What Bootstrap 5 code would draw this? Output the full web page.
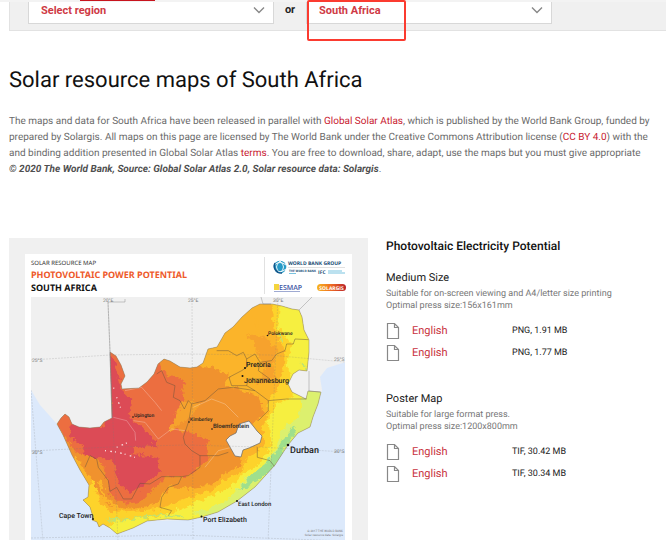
<!DOCTYPE html>
<html lang="en">
<head>
<meta charset="utf-8">
<meta name="viewport" content="width=device-width, initial-scale=1">
<title>Solar resource maps of South Africa</title>
<link href="https://cdn.jsdelivr.net/npm/bootstrap@5.3.0/dist/css/bootstrap.min.css" rel="stylesheet">
<style>
body{font-family:Roboto,"Open Sans",sans-serif;font-size:11px;line-height:16px;color:#6a6a6a;overflow:hidden;background:#fff;text-rendering:geometricPrecision}
a{color:#c8202f;text-decoration:none}
.site-edge{height:2px;background:#f3f3f3;padding-left:80px}
.site-tab{width:75px;height:1px;background:#c8141e}
.page-body{padding-left:9px}
.picker{background:#f0f0f0;border-bottom:1px solid #e2e2e2;border-left:1px solid #e2e2e2;height:29px;padding-left:18px}
.picker-item{width:246px}
.picker .form-select{height:22px;min-height:0;padding:0 30px 3px 12px;border:1px solid #d8d8d8;border-top:0;border-radius:0;background:#fff;color:#cf3a45;font-size:11px;font-weight:700;line-height:18px;box-shadow:none}
.picker-arrow{right:9px;top:4px;width:12px;height:8px;pointer-events:none}
.picker-or{width:32px;color:#222;font-size:11px;line-height:16px}
.marked{left:1px;top:-2px;width:99px;height:41px;border:2px solid #fb3b30;border-radius:2px;pointer-events:none}
h1{font-size:22px;line-height:28px;color:#111;margin:36px 0 19px}
.intro{font-size:10px;white-space:nowrap;margin-bottom:60px}
.intro strong{color:#505050}
.map-panel{width:359px;background:#f0f0f0;padding:16px}
.downloads{padding-left:18px}
h2{font-size:12px;line-height:16px;font-weight:500;color:#111;margin-bottom:16px}
h3{font-size:11px;line-height:16px;color:#222;margin-bottom:2px}
.hint{font-size:9px;line-height:12px;color:#777;margin-bottom:8px}
.file-list{margin-bottom:27px}
.file-row{height:22px}
.file-row svg{width:14px;height:18px;margin-right:12px}
.file-row a{width:100px;font-size:11px;color:#c8323e}
.file-row span{font-size:9px;color:#222}
.place{font-family:Roboto,sans-serif;fill:#222;font-weight:500}
.grid-tag{font-size:5px;fill:#777}
</style>
</head>
<body>
<div class="site-edge"><div class="site-tab"></div></div>
<main class="page-body">
<form class="picker d-flex">
  <div class="picker-item position-relative">
    <label class="visually-hidden" for="region">Region</label>
    <select class="form-select" id="region"><option>Select region</option></select>
    <svg class="picker-arrow position-absolute" viewBox="0 0 12 8" aria-hidden="true"><path d="M1 1.500 6 6.500l5-5" fill="none" stroke="#888" stroke-width="1.400"/></svg>
  </div>
  <div class="picker-or text-center fw-bold">or</div>
  <div class="picker-item position-relative">
    <label class="visually-hidden" for="country">Country</label>
    <select class="form-select" id="country"><option>South Africa</option></select>
    <svg class="picker-arrow position-absolute" viewBox="0 0 12 8" aria-hidden="true"><path d="M1 1.500 6 6.500l5-5" fill="none" stroke="#888" stroke-width="1.400"/></svg>
    <div class="marked position-absolute"></div>
  </div>
</form>
<h1 class="fw-normal">Solar resource maps of South Africa</h1>
<p class="intro">The maps and data for South Africa have been released in parallel with <a href="#">Global Solar Atlas</a>, which is published by the World Bank Group, funded by<br>
prepared by Solargis. All maps on this page are licensed by The World Bank under the Creative Commons Attribution license (<a href="#">CC BY 4.0</a>) with the<br>
and binding addition presented in Global Solar Atlas <a href="#">terms</a>. You are free to download, share, adapt, use the maps but you must give appropriate<br>
<strong class="fst-italic">© 2020 The World Bank, Source: Global Solar Atlas 2.0, Solar resource data: Solargis</strong>.</p>
<div class="d-flex">
<div class="map-panel flex-shrink-0">
<svg class="d-block w-100" viewBox="25 254 327 308" role="img" aria-label="Photovoltaic power potential, South Africa">
<defs>
<clipPath id="frame"><rect x="31" y="297" width="314" height="259"/></clipPath>
<path id="country-shape" d="M57 424 61 418 65 414 69 417 72 424 79 427 90 428 100 427 104 422 112 418 110 352 116 356 121 365 125 376 121 384 122 389 139 388 147 382 154 374 158 364 164 359 170 361 180 367 190 368 197 367 203 363 208 349 217 347 225 333 233 327 242 317 252 308 260 304 272 304 282 306 292 309 299 310 302 317 304 330 309 340 309 352 307 371 299 370 293 374 288 384 292 392 306 399 308 391 321 392 318 404 313 417 310 427 298 433 288 445 275 465 255 487 237 501 218 512 202 517 188 520 167 519 147 521 133 528 117 534 110 528 103 524 99 527 97 522 92 520 93 517 90 507 83 500 88 497 89 485 80 470 72 455 63 435Z"/>
<clipPath id="inland"><use href="#country-shape"/></clipPath>
<linearGradient id="sg"><stop stop-color="#f7b51e"/><stop offset=".5" stop-color="#ee6a24"/><stop offset="1" stop-color="#b9232b"/></linearGradient>
<filter id="rough" x="-10%" y="-10%" width="120%" height="120%" color-interpolation-filters="sRGB"><feTurbulence type="fractalNoise" baseFrequency=".2" numOctaves="4" seed="4"/><feDisplacementMap in="SourceGraphic" scale="8" xChannelSelector="R" yChannelSelector="G"/></filter>
</defs>
<rect x="25" y="254" width="327" height="308" fill="#fff"/>
<g clip-path="url(#frame)">
<rect x="31" y="297" width="314" height="259" fill="#f0f0f0"/>
<path fill="#dce9fb" d="M31 390 40 405 57 424 63 435 72 455 80 470 89 485 88 497 83 500 90 507 93 517 97 522 103 524 117 534 133 528 147 521 188 520 218 512 237 501 255 487 275 465 288 445 298 433 310 427 318 404 322 390 320 377 327 368 346 362V560H31Z"/>
<g clip-path="url(#inland)">
<rect x="50" y="297" width="275" height="245" fill="#fbb42a"/>
<g filter="url(#rough)"><g transform="translate(25 254) scale(.3333)">
<rect x="40" y="100" width="900" height="780" fill="#fbb42a"/>
<path fill="#f0922e" d="M240 260 395 300 480 330 560 338 615 365 600 400 640 405 700 430 720 475 695 500 620 560 645 610 650 635 605 655 560 690 490 705 430 697 400 745 330 765 255 755 215 710 190 660 130 590 60 500Z"/>
<path fill="#f6a22d" d="M670 240 730 255 760 290 745 330 750 375 700 390 720 340 700 300Z"/>
<path fill="#ec6e40" d="M70 470 240 440 235 260 300 300 310 390 395 320 455 365 480 385 470 420 485 450 440 525 485 530 555 560 545 590 550 620 515 645 480 668 420 672 385 705 345 745 290 750 255 725 240 650 205 600 170 620 120 550 80 500Z"/>
<path fill="#f0922e" d="M395 315 470 320 475 375 430 370ZM150 600 210 600 230 640 200 660Z"/>
<path fill="#f6a22d" d="M470 445 500 440 530 450 495 490 460 515 430 535Z"/>
<path fill="#dc4b56" d="M240 290 268 320 280 360 290 410 325 440 310 490 345 515 385 555 395 580 330 575 320 600 400 610 405 655 360 690 315 720 282 690 268 630 240 610 180 608 170 570 135 550 140 510 230 520 262 490Z"/>
<path fill="#fdd32b" d="M735 130 750 230 780 290 775 345 760 400 735 430 725 500 710 520 720 570 660 620 650 655 600 680 560 710 490 730 440 750 400 765 320 770 260 775 230 755 205 680 170 720 190 800 300 870H600L920 600V130Z"/>
<path fill="#f6ef40" d="M765 130 760 220 800 270 785 330 800 370 800 430 755 450 730 500 740 570 705 630 650 660 620 700 540 735 470 765 400 790 260 800 250 870H600L920 600V130Z"/>
<path fill="#dcf06e" d="M850 390 835 430 820 490 770 530 750 590 710 640 660 675 610 735 550 765 500 780 700 800 900 600V390Z"/>
<path fill="#9fdf8d" d="M808 515 770 560 750 600 720 630 670 670 640 712 690 685 750 640 780 580 812 540Z"/>
<path fill="none" stroke="#bfe272" stroke-width="5" d="M245 798 330 795 400 782 470 790M760 235 775 265M825 325 850 350"/>
<path fill="none" stroke="#fbb42a" stroke-width="9" d="M222 680 240 735 290 768M640 180 630 220M690 190 700 240"/>
</g></g>
<g transform="translate(25 254) scale(.3333)">
<path fill="none" stroke="#fff" stroke-opacity=".4" stroke-width="2" d="M265 490 305 500 330 535 332 560M325 500 360 505 400 555 440 525 480 530M300 410 350 400 390 445 410 470M505 460 560 435 600 450 640 490M540 640 580 590 620 580"/>
<g fill="none" stroke="#fff" stroke-opacity=".8" stroke-width="4" stroke-dasharray="3 13 5 9"><path d="M240 590 280 595 330 610M275 580 310 565M265 402 275 405M275 430 290 470"/></g></g>
</g>
<path fill="#f0f0f0" stroke="#666" stroke-width=".7" d="M249 421 254 427 257 431 262 436 260 443 249 448 243 450 241 457 235 456 226 440 230 436 236 433 239 424Z"/>
<g fill="none" stroke="#65533c" stroke-opacity=".75" stroke-width=".6"><use href="#country-shape" stroke="#777"/>
<g transform="translate(25 254) scale(.3333)" stroke-width="1.900"><path d="M395 360 410 350 425 385 450 395 445 430 465 440 478 465 490 440 500 450 492 500 475 550 480 570 500 590 525 605 525 640 490 665 470 668 410 668 375 690 345 688 320 735 295 735 275 700 255 712 250 680 220 640 215 615 195 605 180 640M470 668 460 690 430 700 410 730 405 760 440 770 430 785M500 450 540 440 580 405 625 400 690 410 730 440 730 470 700 500M730 440 785 435 845 435M525 605 580 605 610 595M575 290 610 290 635 305 655 295 665 315 690 300 705 325 740 320 755 300 780 290 785 270 805 270 810 255 850 257M665 315 665 340 650 350 612 370 620 395 665 395 670 375 735 375 700 350 705 325M665 395 690 410M697 580 697 610 735 620 748 637"/></g>
<path stroke="#888" d="M108 302 110 352M108 302H125V299M110 352 112 418M261 297 263 304 271 304M299 310 312 297M309 371 309 391 320 392"/></g>
<path fill="none" stroke="#777" stroke-opacity=".4" stroke-width=".5" stroke-dasharray="2 1" d="M31 360 110 355 185 354 270 355 345 362M31 451 111 447 185 445 260 447 345 452M31 390 43 542M108 302 118 542M192 297 193 542M278 297 268 542M31 538 180 535 345 541"/>
<text class="grid-tag" x="103" y="302">20°E</text><text class="grid-tag" x="188" y="302">25°E</text><text class="grid-tag" x="273" y="302">30°E</text>
<text class="grid-tag" x="32" y="362">25°S</text><text class="grid-tag" x="334" y="361">25°S</text><text class="grid-tag" x="32" y="454">30°S</text><text class="grid-tag" x="334" y="453">30°S</text>
<g fill="#111"><circle cx="267.500" cy="335.500" r=".8"/><circle cx="245" cy="368" r="1"/><circle cx="242.500" cy="376" r="1"/><circle cx="133" cy="417" r=".8"/><circle cx="189" cy="422" r=".8"/><circle cx="212" cy="429" r=".8"/><circle cx="288" cy="445" r="1.300"/><circle cx="237" cy="501" r="1"/><circle cx="201.500" cy="516.500" r="1"/><circle cx="93" cy="519" r="1"/></g>
<g class="place">
<g font-size="5"><text x="268" y="335">Polokwane</text><text x="134" y="417">Upington</text><text x="190" y="421">Kimberley</text></g>
<g font-size="6"><text x="213" y="428">Bloemfontein</text><text x="238" y="506">East London</text></g>
<g font-size="7"><text x="246" y="367">Pretoria</text><text x="244" y="383">Johannesburg</text><text x="203" y="522">Port Elizabeth</text><text x="59" y="518">Cape Town</text></g>
<text x="290" y="453" font-size="9">Durban</text></g>
<g font-size="3" fill="#777" text-anchor="end"><text x="343" y="532">© 2017 THE WORLD BANK</text><text x="343" y="536">Solar resource data: Solargis</text></g>
</g>
<g font-family="Noto Sans,sans-serif"><text x="31" y="265" font-size="6" fill="#333">SOLAR RESOURCE MAP</text>
<text x="31" y="278" font-size="9" font-weight="700" fill="#ee5a2b">PHOTOVOLTAIC POWER POTENTIAL</text>
<text x="31" y="291" font-size="9" font-weight="700" fill="#111">SOUTH AFRICA</text></g>
<path stroke="#ccc" stroke-width=".6" d="M264.500 257V294M288 267.500H345"/>
<circle cx="280" cy="267" r="6.300" fill="#279bc7"/><path d="M274 265q6-5 12 0M274 270q6 4 12-1M280 261q-7 6 0 12M280 261q7 6 0 12" fill="none" stroke="#fff" stroke-width=".9"/><path d="M275 263a7 7 0 0 0 7 10" fill="none" stroke="#15578b" stroke-width="1.500"/>
<g font-family="Open Sans,sans-serif" font-weight="700" fill="#174b73"><text x="288" y="265" font-size="5">WORLD BANK GROUP</text><text x="289" y="272" font-size="3">THE WORLD BANK</text><text x="318" y="274" font-size="5">IFC</text></g>
<path stroke="#57b4d7" stroke-width=".8" d="M328 271H342M328 273H345M289 273.500H296"/>
<path fill="#f4d43c" d="M274 284h5v6h-5z"/><text x="279" y="290" font-family="Open Sans,sans-serif" font-size="7" font-weight="600" fill="#3f55a4">ESMAP</text><path stroke="#3f55a4" stroke-width=".5" d="M274 291.500H300"/>
<rect x="317" y="284" width="29" height="7" rx="3.500" fill="url(#sg)"/><text x="331.500" y="289.500" text-anchor="middle" font-family="Open Sans,sans-serif" font-weight="700" font-size="5" fill="#fff">SOLARGIS</text>
</svg>
</div>
<section class="downloads flex-grow-1">
<h2>Photovoltaic Electricity Potential</h2>
<h3 class="fw-normal">Medium Size</h3>
<p class="hint">Suitable for on-screen viewing and A4/letter size printing<br>Optimal press size:156x161mm</p>
<ul class="file-list list-unstyled">
<li class="file-row d-flex align-items-center"><svg viewBox="0 0 14 18" aria-hidden="true"><path d="M1.500 1.500h7l4 4v11h-11zM8.500 1.500v4h4" fill="none" stroke="#888" stroke-width="1.200"/></svg><a href="#">English</a><span>PNG, 1.91 MB</span></li>
<li class="file-row d-flex align-items-center"><svg viewBox="0 0 14 18" aria-hidden="true"><path d="M1.500 1.500h7l4 4v11h-11zM8.500 1.500v4h4" fill="none" stroke="#888" stroke-width="1.200"/></svg><a href="#">English</a><span>PNG, 1.77 MB</span></li>
</ul>
<h3 class="fw-normal">Poster Map</h3>
<p class="hint">Suitable for large format press.<br>Optimal press size:1200x800mm</p>
<ul class="file-list list-unstyled">
<li class="file-row d-flex align-items-center"><svg viewBox="0 0 14 18" aria-hidden="true"><path d="M1.500 1.500h7l4 4v11h-11zM8.500 1.500v4h4" fill="none" stroke="#888" stroke-width="1.200"/></svg><a href="#">English</a><span>TIF, 30.42 MB</span></li>
<li class="file-row d-flex align-items-center"><svg viewBox="0 0 14 18" aria-hidden="true"><path d="M1.500 1.500h7l4 4v11h-11zM8.500 1.500v4h4" fill="none" stroke="#888" stroke-width="1.200"/></svg><a href="#">English</a><span>TIF, 30.34 MB</span></li>
</ul>
</section>
</div>
</main>
<script src="https://cdn.jsdelivr.net/npm/bootstrap@5.3.0/dist/js/bootstrap.bundle.min.js"></script>
</body>
</html>
